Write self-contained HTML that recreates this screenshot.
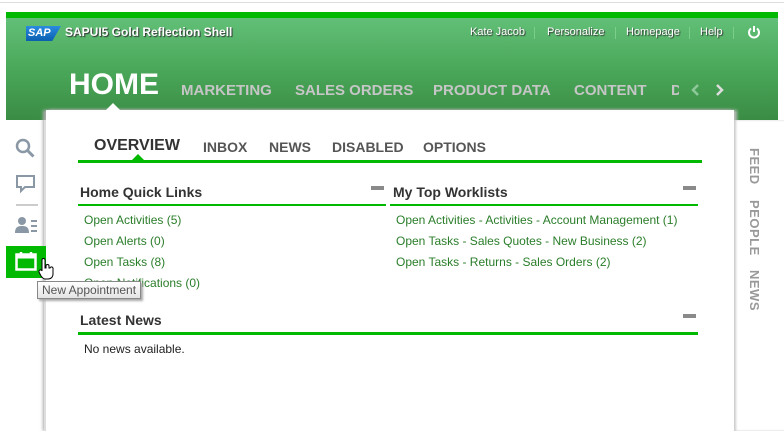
<!DOCTYPE html>
<html><head><style>
body{margin:0;width:784px;height:431px;overflow:hidden;background:#fff;font-family:"Liberation Sans",Arial,sans-serif;position:relative}
.a{position:absolute}
.hdr{left:6px;top:18px;width:772px;height:102px;background:linear-gradient(#62bf77,#4aa85a 50%,#3a8c44)}
.top{left:6px;top:12px;width:772px;height:6px;background:#00b900}
.tl{color:#fff;font-size:11px;text-shadow:1px 1px 1px #333;top:26px}
.nav{color:#c6c6c6;font-size:15px;font-weight:bold;top:82px}
.panel{left:46px;top:110px;width:688px;height:321px;background:#fff;box-shadow:-3px 0 3px #aaa,3px 0 3px #bbb}
.tab{top:139px;font-size:14px;font-weight:bold;color:#555}
.gl{background:#00b900;height:3px}
.h{font-size:14px;font-weight:bold;color:#333}
.lk{font-size:12px;color:#2a7d2a}
.min{width:13px;height:4px;background:#8a8a8a}
.side{color:#999;font-size:13px;font-weight:bold;writing-mode:vertical-rl;left:747px;letter-spacing:.5px}
</style></head><body>
<div class="a" style="left:0;top:2px;width:784px;height:1px;background:#ddd"></div>
<div class="a top"></div>
<div class="a hdr"></div>
<div class="a" style="left:26px;top:26px;width:33px;height:15px;background:linear-gradient(#2a8be0,#0a5fb0);clip-path:polygon(0 0,100% 0,75% 100%,0 100%);color:#fff;font-size:11px;font-weight:bold;font-style:italic;line-height:15px;padding-left:2px">SAP</div>
<div class="a tl" style="left:65px;font-weight:bold;font-size:12px;top:25px">SAPUI5 Gold Reflection Shell</div>
<div class="a tl" style="left:470px">Kate Jacob</div>
<div class="a tl" style="left:547px">Personalize</div>
<div class="a tl" style="left:626px">Homepage</div>
<div class="a tl" style="left:700px">Help</div>
<div class="a" style="left:534px;top:27px;width:1px;height:12px;background:#7ccf8a"></div>
<div class="a" style="left:615px;top:27px;width:1px;height:12px;background:#7ccf8a"></div>
<div class="a" style="left:689px;top:27px;width:1px;height:12px;background:#7ccf8a"></div>
<div class="a" style="left:733px;top:27px;width:1px;height:12px;background:#7ccf8a"></div>
<svg class="a" style="left:747px;top:25px" width="14" height="14" viewBox="0 0 14 14"><path d="M4 3.5A5 5 0 1 0 10 3.5" stroke="#fff" stroke-width="2" fill="none"/><path d="M7 1v6" stroke="#fff" stroke-width="2"/></svg>
<div class="a" style="left:69px;top:68px;color:#fff;font-size:30px;font-weight:bold">HOME</div>
<div class="a nav" style="left:181px">MARKETING</div>
<div class="a nav" style="left:295px">SALES ORDERS</div>
<div class="a nav" style="left:433px">PRODUCT DATA</div>
<div class="a nav" style="left:574px">CONTENT</div>
<div class="a nav" style="left:671px;width:8px;overflow:hidden">D</div>
<svg class="a" style="left:690px;top:83px" width="10" height="14"><path d="M8 2L3 7l5 5" stroke="#8fc89a" stroke-width="2.5" fill="none"/></svg>
<svg class="a" style="left:715px;top:83px" width="10" height="14"><path d="M2 2l5 5-5 5" stroke="#ddd" stroke-width="2.5" fill="none"/></svg>
<div class="a panel"></div>
<div class="a" style="left:106px;top:103px;width:0;height:0;border:7px solid transparent;border-bottom-color:#fff;border-top:0"></div>
<div class="a" style="left:734px;top:120px;width:50px;height:311px;background:#fff;box-shadow:inset 2px 0 2px #ccc"></div>
<div class="a side" style="top:148px">FEED</div>
<div class="a side" style="top:200px">PEOPLE</div>
<div class="a side" style="top:270px">NEWS</div>
<div class="a" style="left:44px;top:120px;width:2px;height:311px;background:#ddd"></div>
<svg class="a" style="left:15px;top:138px" width="22" height="22"><circle cx="8" cy="8" r="6" stroke="#8a98a6" stroke-width="2.5" fill="none"/><path d="M12.5 12.5l6 6" stroke="#8a98a6" stroke-width="3"/></svg>
<svg class="a" style="left:15px;top:174px" width="22" height="20"><path d="M2 2h17v11h-9l-4 4v-4H2z" stroke="#8a98a6" stroke-width="2" fill="none"/></svg>
<div class="a" style="left:16px;top:204px;width:22px;height:2px;background:#ccc"></div>
<svg class="a" style="left:15px;top:216px" width="24" height="18"><circle cx="7" cy="5" r="4" fill="#8a98a6"/><path d="M0 17c0-6 3-7 7-7s7 1 7 7z" fill="#8a98a6"/><path d="M16 5h6M16 10h6M16 15h6" stroke="#8a98a6" stroke-width="2"/></svg>
<div class="a" style="left:6px;top:246px;width:40px;height:32px;background:#00b900"></div>
<svg class="a" style="left:15px;top:251px" width="22" height="20"><rect x="1.5" y="3.5" width="19" height="15" stroke="#fff" stroke-width="2.5" fill="none"/><rect x="1.5" y="3.5" width="19" height="4" fill="#fff"/><path d="M6 1v5M16 1v5" stroke="#fff" stroke-width="2.5"/></svg>
<svg class="a" style="left:38px;top:258px" width="18" height="22"><path d="M4 2a1.5 1.5 0 0 1 3 0v8h1V8a1.5 1.5 0 0 1 3 0v2h1a1.5 1.5 0 0 1 3 1v5c0 3-2 5-5 5H7c-2 0-3-2-4-3l-2-4a1.5 1.5 0 0 1 3-1z" fill="#fff" stroke="#000"/></svg>
<div class="a tab" style="left:94px;top:137px;font-size:16px;color:#333">OVERVIEW</div>
<div class="a tab" style="left:203px">INBOX</div>
<div class="a tab" style="left:269px">NEWS</div>
<div class="a tab" style="left:332px">DISABLED</div>
<div class="a tab" style="left:423px">OPTIONS</div>
<div class="a gl" style="left:78px;top:160px;width:624px"></div>
<div class="a" style="left:132px;top:154px;border:6px solid transparent;border-bottom-color:#00b900;border-top:0"></div>
<div class="a h" style="left:80px;top:184px">Home Quick Links</div>
<div class="a min" style="left:371px;top:186px"></div>
<div class="a gl" style="left:78px;top:204px;width:308px;height:2px"></div>
<div class="a h" style="left:393px;top:184px">My Top Worklists</div>
<div class="a min" style="left:683px;top:186px"></div>
<div class="a gl" style="left:390px;top:204px;width:308px;height:2px"></div>
<div class="a lk" style="left:84px;top:213px">Open Activities (5)</div>
<div class="a lk" style="left:84px;top:234px">Open Alerts (0)</div>
<div class="a lk" style="left:84px;top:255px">Open Tasks (8)</div>
<div class="a lk" style="left:84px;top:276px">Open Notifications (0)</div>
<div class="a lk" style="left:396px;top:213px">Open Activities - Activities - Account Management (1)</div>
<div class="a lk" style="left:396px;top:234px">Open Tasks - Sales Quotes - New Business (2)</div>
<div class="a lk" style="left:396px;top:255px">Open Tasks - Returns - Sales Orders (2)</div>
<div class="a" style="left:37px;top:281px;padding:1px 4px;background:linear-gradient(#fff,#e4e4e4);border:1px solid #888;font-size:12px;color:#555;box-shadow:2px 2px 2px #aaa">New Appointment</div>
<div class="a h" style="left:80px;top:312px">Latest News</div>
<div class="a min" style="left:683px;top:314px"></div>
<div class="a gl" style="left:78px;top:332px;width:620px"></div>
<div class="a" style="left:84px;top:342px;font-size:12px;color:#222">No news available.</div>
</body></html>
